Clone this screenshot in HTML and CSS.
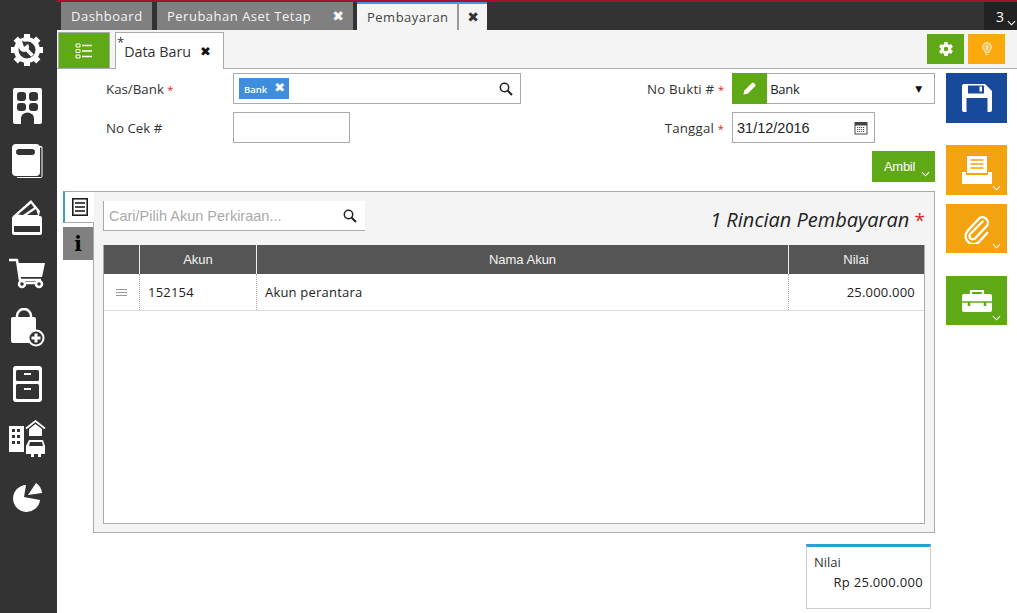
FILE: index.html
```html
<!DOCTYPE html>
<html lang="id">
<head>
<meta charset="utf-8">
<title>Pembayaran</title>
<link rel="stylesheet" href="styles.css">
</head>
<body>
<div class="app">
  <nav class="sidebar">
    <svg class="nav-icon" viewBox="0 0 40 40"><g fill="#fff"><rect x="17" y="4" width="6" height="32"/><rect x="17" y="4" width="6" height="32" transform="rotate(45 20 20)"/><rect x="17" y="4" width="6" height="32" transform="rotate(90 20 20)"/><rect x="17" y="4" width="6" height="32" transform="rotate(135 20 20)"/><circle cx="20" cy="20" r="13"/></g><circle cx="20" cy="20" r="8.500" fill="#333"/><path d="M18 18l7.500 7.500" stroke="#fff" stroke-width="3.500"/><circle cx="17" cy="17" r="5" fill="#fff"/><path d="M17 17l-2-6 7 2z" fill="#333"/></svg>
    <svg class="nav-icon" viewBox="0 0 40 40"><rect x="6" y="2" width="29" height="36" rx="2" fill="#fff"/><rect x="10" y="6" width="9" height="9" rx="3" fill="#333"/><rect x="22" y="6" width="9" height="9" rx="3" fill="#333"/><rect x="10" y="17" width="9" height="8" rx="3" fill="#333"/><rect x="22" y="17" width="9" height="8" rx="3" fill="#333"/><path d="M14 38v-6a6 5 0 0 1 13 0v6z" fill="#333"/></svg>
    <svg class="nav-icon" viewBox="0 0 40 40"><path d="M32 5h2a1.500 1.500 0 0 1 1.500 1.500V35a2 2 0 0 1-2 2H10v-1h24.500V6.500H32z" fill="#fff"/><rect x="5" y="3" width="28" height="32" rx="4" fill="#fff"/><rect x="9" y="8" width="19" height="6" rx="3" fill="#333"/></svg>
    <svg class="nav-icon" viewBox="0 0 40 40"><path d="M6 19L24 3l9 11-1 5z" fill="#fff"/><path d="M11 17.500L24 6.500l3 4-11 7.500z" fill="#333"/><path d="M20 18l9-6 2 6z" fill="#333"/><rect x="5" y="19" width="30" height="19" rx="2" fill="#fff"/><rect x="7" y="29" width="26" height="6" fill="#333"/></svg>
    <svg class="nav-icon" viewBox="0 0 40 40"><path d="M2 7h8l3 20h21" fill="none" stroke="#fff" stroke-width="2.500" stroke-linejoin="round"/><path d="M11 10h27l-3 14H13z" fill="#fff"/><circle cx="15" cy="31" r="3" fill="#333" stroke="#fff" stroke-width="2.500"/><circle cx="32" cy="31" r="3" fill="#333" stroke="#fff" stroke-width="2.500"/><path d="M18 30h11" stroke="#fff" stroke-width="2.500"/></svg>
    <svg class="nav-icon" viewBox="0 0 40 40"><path d="M10 11V8a7 7 0 0 1 14 0v3" fill="none" stroke="#fff" stroke-width="2.500"/><rect x="4" y="9" width="25" height="26" rx="2" fill="#fff"/><circle cx="29" cy="30" r="7.500" fill="#333" stroke="#fff" stroke-width="2"/><path d="M29 25.500v9M24.500 30h9" stroke="#fff" stroke-width="3"/></svg>
    <svg class="nav-icon" viewBox="0 0 40 40"><rect x="6" y="2" width="29" height="36" rx="3" fill="#fff"/><rect x="9" y="6" width="23" height="11" rx="1.500" fill="#333"/><rect x="9" y="20" width="23" height="15" rx="1.500" fill="#333"/><rect x="17" y="9" width="7" height="2" fill="#fff"/><rect x="17" y="24" width="7" height="2" fill="#fff"/></svg>
    <svg class="nav-icon" viewBox="0 0 40 40"><rect x="2" y="6" width="15" height="26" fill="#fff"/><path d="M5 9h3v3H5zM10 9h3v3h-3zM5 15h3v3H5zM10 15h3v3h-3zM5 21h3v3H5zM10 21h3v3h-3z" fill="#333"/><path d="M19 8.500L28.500 1l9.500 7.500" fill="none" stroke="#fff" stroke-width="1.800"/><path d="M22 9l6.500-5 6.500 5v7H22z" fill="#fff"/><path d="M22 20h14l2 6v8h-4v3h-3v-3h-4v3h-3v-3H19v-8z" fill="#fff"/><path d="M23 22h12l1 4H22z" fill="#333"/></svg>
    <svg class="nav-icon" viewBox="0 0 40 40"><path d="M19 9A13.500 13.500 0 1 0 33 24L17 21z" fill="#fff"/><path d="M21 19L29 7a13 13 0 0 1 6 10z" fill="#fff"/></svg>
  </nav>

  <div class="main">
    <header class="tabbar">
      <div class="tab tab-plain tab-dash">Dashboard</div>
      <div class="tab tab-plain tab-closable">Perubahan Aset Tetap<span class="x-mark">&#10006;</span></div>
      <div class="tab tab-active">Pembayaran</div>
      <div class="tab tab-active tab-close"><span class="x-mark">&#10006;</span></div>
      <div class="counter">3<svg class="chev" viewBox="0 0 10 6"><path d="M1 1l4 4 4-4" fill="none" stroke="#fff" stroke-width="1.200"/></svg></div>
    </header>

    <div class="toolbar">
      <button class="list-btn" type="button">
        <svg viewBox="0 0 18 16" class="list-icon"><path d="M1 1h4v3H1zM1 6.500h4v3H1zM1 12h4v3H1z" fill="none" stroke="#fff"/><path d="M7 2.500h10M7 8h10M7 13.500h10" stroke="#fff" stroke-width="1.500"/></svg>
      </button>
      <div class="doc-tab"><sup class="star">*</sup>Data Baru<span class="x-mark x-dark">&#10006;</span></div>
      <div class="tool-right">
        <button class="tool-btn green" type="button"><svg viewBox="0 0 16 16" class="tool-icon"><g fill="#fff"><rect x="6.200" y="1" width="3.600" height="14"/><rect x="6.200" y="1" width="3.600" height="14" transform="rotate(60 8 8)"/><rect x="6.200" y="1" width="3.600" height="14" transform="rotate(120 8 8)"/><circle cx="8" cy="8" r="5.300"/></g><circle cx="8" cy="8" r="2.200" fill="#5fa916"/></svg></button>
        <button class="tool-btn orange" type="button"><svg viewBox="0 0 16 16" class="tool-icon"><path d="M8 1.500a4.500 4.500 0 0 0-2.500 8.200L6 11.500h4l.5-1.800A4.500 4.500 0 0 0 8 1.500z" fill="#fbc55c" stroke="#fff0c8" stroke-width="1"/><path d="M8 4.500v4M6.500 13.500h3" stroke="#fff0c8" stroke-width="1.200"/></svg></button>
      </div>
    </div>

    <div class="content">
      <div class="work">
        <form class="form">
          <div class="form-col form-left">
            <div class="form-row">
              <label class="lbl">Kas/Bank <i class="req">*</i></label>
              <div class="field field-bank">
                <span class="chip">Bank<span class="chip-x">&#10006;</span></span>
                <svg class="search" viewBox="0 0 14 14"><circle cx="5.500" cy="5.500" r="4.200" fill="none" stroke="#222" stroke-width="1.500"/><path d="M8.700 8.700L13 13" stroke="#222" stroke-width="2"/></svg>
              </div>
            </div>
            <div class="form-row">
              <label class="lbl">No Cek #</label>
              <div class="field field-cek"></div>
            </div>
          </div>
          <div class="form-col form-right">
            <div class="form-row">
              <label class="lbl lbl-r">No Bukti # <i class="req">*</i></label>
              <div class="field field-bukti">
                <span class="pencil"><svg viewBox="0 0 16 16" class="pencil-icon"><path d="M1.500 14.500l1-4.500 8-8a1.500 1.500 0 0 1 2 0l1.500 1.500a1.500 1.500 0 0 1 0 2l-8 8z" fill="#fff"/></svg></span>
                <span class="bukti-text">Bank</span>
                <span class="caret">&#9660;</span>
              </div>
            </div>
            <div class="form-row">
              <label class="lbl lbl-r">Tanggal <i class="req">*</i></label>
              <div class="field field-date">
                <span class="date-text">31/12/2016</span>
                <svg class="cal" viewBox="0 0 14 14"><rect x="1" y="1.500" width="12" height="11.500" fill="none" stroke="#444"/><rect x="1" y="1.500" width="12" height="3" fill="#444"/><path d="M3 6.500h8M3 8.500h8M3 10.500h8" stroke="#555" stroke-dasharray="1.200 .8"/></svg>
              </div>
            </div>
            <div class="ambil-row">
              <button class="ambil" type="button">Ambil<svg class="chev chev-ambil" viewBox="0 0 10 6"><path d="M1 1l4 4 4-4" fill="none" stroke="#fff" stroke-width="1.200"/></svg></button>
            </div>
          </div>
        </form>

        <div class="panel-wrap">
          <div class="side-tabs">
            <div class="side-tab side-active"><svg viewBox="0 0 16 18" class="side-icon"><rect x=".8" y=".8" width="14.400" height="16.400" fill="#fff" stroke="#111" stroke-width="1.500"/><path d="M3 5h10M3 9h10M3 13h10" stroke="#111" stroke-width="1.400"/></svg></div>
            <div class="side-tab side-info"><span class="info">i</span></div>
          </div>
          <section class="panel">
            <div class="panel-head">
              <div class="searchbox">
                <span class="placeholder">Cari/Pilih Akun Perkiraan...</span>
                <svg class="search" viewBox="0 0 14 14"><circle cx="5.500" cy="5.500" r="4.200" fill="none" stroke="#222" stroke-width="1.500"/><path d="M8.700 8.700L13 13" stroke="#222" stroke-width="2"/></svg>
              </div>
              <h2 class="panel-title">1 Rincian Pembayaran <i class="req req-big">*</i></h2>
            </div>
            <div class="grid">
              <div class="grid-head">
                <div class="c-handle"></div>
                <div class="c-akun">Akun</div>
                <div class="c-nama">Nama Akun</div>
                <div class="c-nilai">Nilai</div>
              </div>
              <div class="grid-row">
                <div class="c-handle"><span class="handle"></span></div>
                <div class="c-akun">152154</div>
                <div class="c-nama">Akun perantara</div>
                <div class="c-nilai">25.000.000</div>
              </div>
            </div>
          </section>
        </div>

        <div class="summary-row">
          <div class="summary">
            <div class="sum-label">Nilai</div>
            <div class="sum-value">Rp 25.000.000</div>
          </div>
        </div>
      </div>

      <aside class="actions">
        <button class="act act-save" type="button"><svg viewBox="0 0 32 30" class="act-icon"><path d="M1 3a2 2 0 0 1 2-2h21l7 7v19a2 2 0 0 1-2 2H3a2 2 0 0 1-2-2z" fill="#fff"/><rect x="7" y="2.500" width="16" height="8" fill="#174a9b"/><rect x="18.500" y="3.500" width="2.500" height="5" fill="#fff"/><rect x="5.500" y="15" width="21" height="14" fill="#174a9b"/></svg></button>
        <button class="act act-print" type="button"><svg viewBox="0 0 32 30" class="act-icon"><path d="M6 1h20v17H6z" fill="#fff"/><path d="M9.500 5h13M9.500 9h13M9.500 13h13" stroke="#f3a30f" stroke-width="1.500"/><path d="M1 17h4v3h22v-3h4v12H1z" fill="#fff"/></svg><svg class="chev chev-act" viewBox="0 0 10 6"><path d="M1 1l4 4 4-4" fill="none" stroke="#fff" stroke-width="1.200"/></svg></button>
        <button class="act act-clip" type="button"><svg viewBox="0 0 32 32" class="act-icon"><path d="M22 8L9 21a3.500 3.500 0 0 0 5 5l13-14a6 6 0 0 0-8-8L6 18a8.500 8.500 0 0 0 12 12l9-10" fill="none" stroke="#fff" stroke-width="2.400" stroke-linecap="round"/></svg><svg class="chev chev-act" viewBox="0 0 10 6"><path d="M1 1l4 4 4-4" fill="none" stroke="#fff" stroke-width="1.200"/></svg></button>
        <button class="act act-case" type="button"><svg viewBox="0 0 32 24" class="act-icon act-icon-case"><path d="M10 5V2h12v3" fill="none" stroke="#fff" stroke-width="2.200"/><rect x="1" y="5" width="30" height="18" rx="2" fill="#fff"/><path d="M1 13h30" stroke="#5fa916" stroke-width="1.500"/><path d="M8 13v4M24 13v4" stroke="#5fa916" stroke-width="2.500"/></svg><svg class="chev chev-act" viewBox="0 0 10 6"><path d="M1 1l4 4 4-4" fill="none" stroke="#fff" stroke-width="1.200"/></svg></button>
      </aside>
    </div>
  </div>
</div>
</body>
</html>
```
FILE: styles.css
```css
* { box-sizing: border-box; }
html, body { margin: 0; padding: 0; height: 100%; overflow: hidden; background: #fff; }
body { font-family: "Open Sans", "Noto Sans", sans-serif; font-size: 13px; color: #222; }
button { border: 0; padding: 0; margin: 0; font: inherit; cursor: pointer; }

.app { display: flex; width: 1017px; height: 613px; border-top: 2px solid #a5122f; }

.sidebar { width: 57px; flex: none; background: #333; display: flex; flex-direction: column; align-items: center; padding: 30px 3px 0 0; margin-top: -2px; gap: 15.700px; }
.nav-icon { width: 40px; height: 40px; flex: none; display: block; }

.main { flex: 1; min-width: 0; display: flex; flex-direction: column; }

.tabbar { height: 28px; flex: none; background: #333; display: flex; padding-left: 4px; color: #fff; }
.tab { height: 28px; display: flex; align-items: center; letter-spacing: .5px; }
.tab-plain { background: #808080; color: #f4f4f4; padding: 0 10px; margin-right: 5px; }
.tab-dash { width: 91px; }
.tab-closable { width: 196px; padding-right: 9px; margin-right: 4px; justify-content: space-between; }
.tab-closable .x-mark { color: #fff; }
.tab-active { background: #f4f4f4; color: #444; border-top: 2px solid #3d9bd8; }
.tab-active:nth-child(3) { padding: 0 9px 0 10px; border-right: 2px solid #999; width: 102px; }
.tab-close { width: 28px; justify-content: center; color: #333; }
.x-mark { font-family: "DejaVu Sans", sans-serif; font-size: 14px; line-height: 1; letter-spacing: 0; }
.counter { margin-left: auto; width: 33px; height: 28px; background: #222; color: #fff; font-size: 14px; padding: 6px 0 0 12px; display: flex; position: relative; align-items: flex-start; line-height: 18px; }
.chev { width: 9px; height: 6px; display: block; }
.counter .chev { position: absolute; right: 1px; bottom: 4px; }

.toolbar { height: 39px; flex: none; background: #f4f4f4; border-bottom: 1px solid #aaa; display: flex; align-items: flex-end; padding: 0 12px 0 1px; }
.list-btn { width: 52px; height: 36px; background: #5fa916; border: 1px solid #aaa; border-bottom: 0; display: flex; align-items: center; justify-content: center; }
.list-icon { width: 18px; height: 16px; }
.doc-tab { width: 109px; height: 37px; margin-left: 5px; margin-bottom: -1px; background: #fff; border: 1px solid #aaa; border-bottom: 0; font-size: 14.300px; display: flex; align-items: center; padding-left: 1px; color: #333; }
.star { font-size: 13px; line-height: 1; align-self: flex-start; margin-top: 3px; }
.doc-tab .x-dark { margin-left: 9px; font-size: 13px; color: #111; }
.tool-right { margin-left: auto; display: flex; gap: 4px; align-self: flex-start; margin-top: 4px; }
.tool-btn { width: 37px; height: 30px; display: flex; align-items: center; justify-content: center; }
.green { background: #5fa916; }
.orange { background: #fba90c; }
.tool-icon { width: 16px; height: 16px; }

.content { flex: 1; display: flex; min-height: 0; }
.work { width: 878px; flex: none; padding-left: 6px; }

.form { display: flex; height: 122px; padding-top: 4px; justify-content: space-between; }
.form-col { display: flex; flex-direction: column; gap: 8px; }
.form-row { display: flex; align-items: center; height: 31px; }
.form-left { padding-left: 43px; }
.lbl { width: 127px; flex: none; color: #333; font-size: 13.300px; white-space: nowrap; }
.lbl-r { width: auto; flex: 1; text-align: right; padding-right: 8px; letter-spacing: .2px; }
.req { color: #d22; font-style: normal; font-size: 11px; }
.field { background: #fff; border: 1px solid #aaa; height: 31px; position: relative; display: flex; align-items: center; }
.field-bank { width: 288px; padding: 0 7px 0 5px; justify-content: space-between; }
.field-cek { width: 117px; }
.field-bukti { width: 203px; flex: none; }
.field-date { width: 143px; flex: none; padding: 0 6px 0 4px; justify-content: space-between; margin-right: 60px; }
.form-right { width: 288px; }
.chip { background: #3d8edd; color: #fff; font-size: 9.500px; font-weight: 600; display: flex; align-items: center; height: 21px; padding: 2px 4px 0 5px; }
.chip-x { font-family: "DejaVu Sans", sans-serif; font-size: 13px; font-weight: 700; margin-left: 7px; margin-top: -4px; }
.search { width: 14px; height: 14px; flex: none; }
.pencil { width: 35px; height: 31px; margin: -1px 0 -1px -1px; background: #5fa916; display: flex; align-items: center; justify-content: center; flex: none; }
.pencil-icon { width: 15px; height: 15px; }
.bukti-text { margin-left: 3px; font-size: 13px; flex: 1; letter-spacing: -.3px; }
.caret { font-size: 9px; color: #111; margin-right: 12px; font-family: "DejaVu Sans", sans-serif; }
.date-text { font-family: "Liberation Sans", sans-serif; font-size: 14.500px; color: #222; }
.cal { width: 14px; height: 14px; }
.ambil-row { display: flex; justify-content: flex-end; }
.ambil { width: 63px; height: 31px; background: #5fa916; color: #fff; font-family: "Liberation Sans", sans-serif; font-size: 13px; letter-spacing: -.3px; position: relative; text-align: left; padding-left: 12px; }
.chev-ambil { position: absolute; right: 5px; bottom: 5px; }

.panel-wrap { display: flex; height: 342px; }
.side-tabs { width: 31px; flex: none; display: flex; flex-direction: column; gap: 4px; margin-right: -1px; position: relative; z-index: 1; }
.side-tab { width: 30px; display: flex; align-items: center; justify-content: center; }
.side-active { height: 32px; background: #fff; border-left: 2px solid #3aa0c0; border-top: 1px solid #aaa; border-bottom: 1px solid #aaa; width: 31px; }
.side-icon { width: 16px; height: 18px; }
.side-info { height: 33px; background: #808080; }
.info { font-family: "DejaVu Serif", serif; font-weight: 700; font-size: 20px; color: #000; line-height: 1; }
.panel { width: 842px; flex: none; background: #f4f4f4; border: 1px solid #aaa; padding: 9px 9px 8px; display: flex; flex-direction: column; }
.panel-head { height: 44px; flex: none; display: flex; justify-content: space-between; align-items: flex-start; }
.searchbox { width: 262px; height: 30px; background: #fff; border-left: 1px solid #aaa; border-bottom: 1px solid #aaa; display: flex; align-items: center; justify-content: space-between; padding: 0 8px 0 5px; }
.placeholder { font-family: "Liberation Sans", sans-serif; font-size: 14.500px; color: #aaa; }
.panel-title { margin: 7px 0 0; font-size: 20px; line-height: 24px; font-weight: 400; font-style: italic; color: #222; }
.req-big { font-size: 19px; }
.grid { flex: 1; background: #fff; border: 1px solid #aaa; border-top: 0; min-height: 0; }
.grid-head, .grid-row { display: grid; grid-template-columns: 35px 117px 532px 135px; }
.grid-head { height: 29px; background: #555; color: #f4f4f4; font-family: "Liberation Sans", sans-serif; font-size: 13px; text-align: center; line-height: 29px; }
.grid-head > div + div { border-left: 1px solid #eee; }
.grid-row { height: 37px; border-bottom: 1px solid #ddd; line-height: 36px; color: #222; letter-spacing: .2px; }
.grid-row > div { padding: 0 8px; }
.grid-row > div + div { border-left: 1px dotted #aaa; }
.grid-row .c-nilai { text-align: right; }
.handle { display: block; width: 11px; height: 7px; margin: 15px 0 0 4px; border-top: 1px solid #999; border-bottom: 1px solid #999; position: relative; }
.handle::after { content: ""; position: absolute; left: 0; right: 0; top: 2px; height: 1px; background: #999; }

.summary-row { display: flex; justify-content: flex-end; padding: 11px 4px 0 0; }
.summary { width: 125px; height: 65px; border: 1px solid #ccc; border-top: 3px solid #2a9fd6; padding: 5px 7px 0 7px; }
.sum-label { line-height: 20px; color: #333; }
.sum-value { text-align: right; line-height: 20px; color: #222; letter-spacing: .3px; }

.actions { width: 61px; margin-left: 11px; flex: none; display: flex; flex-direction: column; padding-top: 4px; }
.act { width: 61px; height: 50px; position: relative; display: flex; align-items: center; justify-content: center; }
.act-save { background: #174a9b; }
.act-print { background: #f3a30f; margin-top: 22px; }
.act-clip { background: #f3a30f; margin-top: 9px; height: 49px; }
.act-case { background: #5fa916; margin-top: 23px; height: 49px; }
.act-icon { width: 32px; height: 30px; }
.act-icon-case { height: 24px; }
.chev-act { position: absolute; right: 6px; bottom: 4px; }
```
